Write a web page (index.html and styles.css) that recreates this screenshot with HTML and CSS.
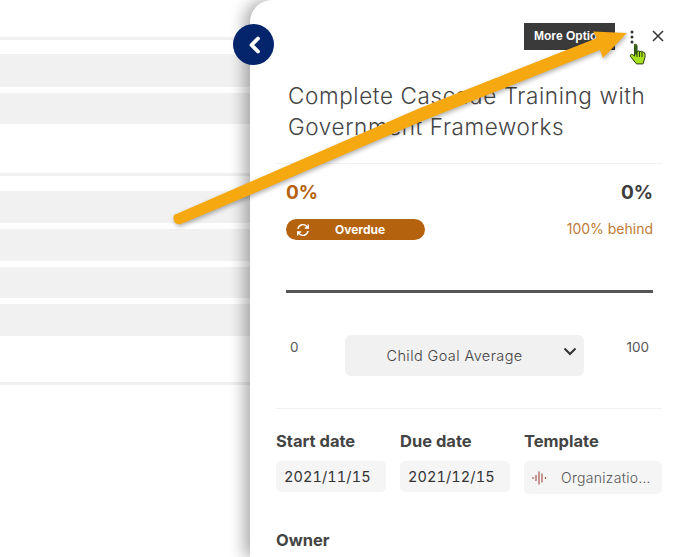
FILE: index.html
```html
<!DOCTYPE html>
<html lang="en">
<head>
<meta charset="utf-8">
<title>Goal detail</title>
<link rel="stylesheet" href="styles.css">
</head>
<body>
<main class="page">
  <section class="list">
    <div class="rule rule-a"></div>
    <div class="row row-a"></div>
    <div class="row row-b"></div>
    <div class="rule rule-b"></div>
    <div class="row row-c"></div>
    <div class="row row-d"></div>
    <div class="row row-e"></div>
    <div class="row row-f"></div>
    <div class="rule rule-c"></div>
  </section>

  <aside class="panel">
    <header class="actions">
      <div class="tooltip">More Options</div>
      <svg class="dots" width="6" height="18" viewBox="0 0 6 18"><circle cx="3" cy="3" r="1.500"/><circle cx="3" cy="8" r="1.500"/><circle cx="3" cy="13" r="1.500"/></svg>
      <svg class="close" width="12" height="12" viewBox="0 0 12 12"><path d="M1 1l10 10M11 1L1 11"/></svg>
    </header>
    <h1 class="title">Complete Cascade Training with Government Frameworks</h1>
    <div class="progress">
      <div class="stat-row">
        <span class="pct pct-warn">0%</span>
        <span class="pct">0%</span>
      </div>
      <div class="status-row">
        <span class="pill">
          <svg class="pill-icon" width="14" height="14" viewBox="0 0 14 14"><path d="M2 6a5 5 0 0 1 9-2.300L12.300 5M12.300 1.500V5H8.800M12 8a5 5 0 0 1-9 2.300L1.700 9M1.700 12.500V9h3.500"/></svg>
          <span class="pill-text">Overdue</span>
        </span>
        <span class="behind">100% behind</span>
      </div>
      <div class="track"></div>
      <div class="scale">
        <span class="scale-num">0</span>
        <div class="select">
          <span>Child Goal Average</span>
          <svg class="chevron" width="14" height="9" viewBox="0 0 14 9"><path d="M1.500 1.500L7 7l5.500-5.500"/></svg>
        </div>
        <span class="scale-num">100</span>
      </div>
    </div>
    <div class="fields">
      <div class="field field-date">
        <div class="label">Start date</div>
        <div class="input">2021/11/15</div>
      </div>
      <div class="field field-date">
        <div class="label">Due date</div>
        <div class="input">2021/12/15</div>
      </div>
      <div class="field field-template">
        <div class="label">Template</div>
        <div class="input input-template">
          <svg class="wave" width="16" height="16" viewBox="0 0 16 16"><path d="M1 7v2M4 5v6M7 1.500v13M10 3.500v9M13.500 7v2"/></svg>
          <span class="template-name">Organizatio...</span>
        </div>
      </div>
    </div>
    <div class="label owner">Owner</div>
  </aside>

  <button class="back" type="button" aria-label="Back">
    <svg width="14" height="20" viewBox="0 0 14 20"><path d="M11 3.500L4.500 10l6.500 6.500"/></svg>
  </button>

  <svg class="arrow" width="688" height="557" viewBox="0 0 688 557">
    <path class="arrow-shape" d="M174 215L250 182 420 108 597 38 593 31.500 627 33 603 58 600 50 420 122 250 195 181 224Q175 225 174 220.500Q173 217 174 215Z"/>
  </svg>
  <svg class="cursor" width="18" height="22" viewBox="0 0 18 22">
    <path class="cursor-fill" d="M5.500 1.500c1.200-.6 2.500.2 2.500 1.200v5.800l1.500-.5 1.500.5 1.500-.2 1.500.7 1.500.7c.8 1.800.8 4 0 6.300l-1.500 4.900H7.500L1.500 13.500c-.6-1.300.5-2.600 2-2L5.500 13V2.500z"/>
    <path class="cursor-finger" d="M5.500 2.500c.5-1 2-1 2.500 0v9H5.500z"/>
    <path class="cursor-line" d="M8 8.500V14M10.500 8.500V14M13 9V14"/>
  </svg>
</main>
</body>
</html>
```
FILE: styles.css
```css
* { box-sizing: border-box; }
html, body { margin: 0; padding: 0; background: #fff; }
body { font-family: "Inter", "Noto Sans", sans-serif; color: #444; }

.page {
  position: relative;
  width: 688px;
  height: 557px;
  overflow: hidden;
  background: #fff;
}

/* Background list */
.list { width: 250px; display: flex; flex-direction: column; padding-top: 37px; }
.rule { height: 3px; background: #f0f0f0; }
.row { background: #f1f1f1; }
.row-a { height: 33px; margin-top: 14px; }
.row-b { height: 31px; margin-top: 6px; }
.rule-b { margin-top: 49px; }
.row-c { height: 32px; margin-top: 15px; }
.row-d { height: 32px; margin-top: 6px; }
.row-e { height: 31px; margin-top: 6px; }
.row-f { height: 32px; margin-top: 6px; }
.rule-c { margin-top: 46px; }

/* Panel */
.panel {
  position: absolute;
  left: 250px;
  top: 0;
  width: 438px;
  height: 557px;
  padding-left: 26px;
  padding-right: 26px;
  background: #fff;
  border-top-left-radius: 22px;
  box-shadow: -6px 0 15px rgba(0, 0, 0, 0.32);
  overflow: hidden;
}

.actions {
  display: flex;
  align-items: flex-start;
  height: 80px;
  padding: 23px 0 0 248px;
}
.tooltip {
  width: 91px;
  height: 27px;
  flex: none;
  padding: 6px 0 0 10px;
  background: #3a3a3a;
  color: #fff;
  font: 700 12px/15px "Liberation Sans", Arial, sans-serif;
  white-space: nowrap;
  overflow: hidden;
}
.dots { flex: none; margin: 6px 0 0 14px; fill: #333; }
.close { flex: none; margin: 7px 0 0 17px; fill: none; stroke: #333; stroke-width: 1.500; }

.title {
  margin: 0 0 0 12px;
  padding-bottom: 21px;
  font-weight: 300;
  font-size: 22.500px;
  letter-spacing: 0.6px;
  line-height: 31px;
  color: #444;
}

.progress { border-top: 1px solid #f2f2f2; padding: 18px 9px 0 10px; height: 246px; border-bottom: 1px solid #f2f2f2; }
.stat-row { display: flex; justify-content: space-between; align-items: center; height: 22px; }
.pct { font-weight: 700; font-size: 19px; line-height: 22px; color: #3c3c3c; }
.pct-warn { color: #b5620f; }

.status-row { display: flex; justify-content: space-between; align-items: center; margin-top: 15px; height: 21px; }
.pill {
  width: 139px;
  height: 21px;
  display: flex;
  align-items: center;
  padding-left: 10px;
  border-radius: 11px;
  background: #b5620f;
  color: #fff;
  font-weight: 700;
  font-size: 12px;
}
.pill-icon { flex: none; fill: none; stroke: #fff; stroke-width: 1.400; }
.pill-text { margin-left: 25px; }
.behind { font-size: 14px; color: #c07a36; margin-top: -2px; }

.track { height: 3px; margin-top: 50px; background: #555; }

.scale { display: flex; align-items: flex-start; margin-top: 42px; }
.scale-num { font-size: 13.500px; line-height: 18px; color: #555; margin-top: 3px; }
.scale-num:first-child { margin-left: 4px; }
.select {
  position: relative;
  width: 239px;
  height: 41px;
  margin-left: 46px;
  margin-right: 43px;
  padding-right: 19px;
  display: flex;
  align-items: center;
  justify-content: center;
  background: #f1f1f1;
  border-radius: 6px;
  font-size: 14.500px;
  letter-spacing: 0.4px;
  font-weight: 300;
  color: #444;
}
.chevron { position: absolute; right: 7px; top: 12px; fill: none; stroke: #333; stroke-width: 2; }

.fields { display: flex; gap: 14px; margin-top: 22px; }
.field-date { width: 110px; }
.field-template { width: 138px; }
.label { font-weight: 700; font-size: 16.500px; line-height: 20px; color: #444; }
.input {
  display: flex;
  align-items: center;
  height: 31px;
  margin-top: 10px;
  padding-left: 8px;
  background: #f5f5f5;
  border-radius: 5px;
  font-size: 14.500px;
  font-variant-numeric: tabular-nums;
  letter-spacing: 0.1px;
  color: #333;
}
.input-template { height: 33px; padding-left: 8px; color: #555; letter-spacing: 0.3px; font-size: 14px; font-weight: 300; }
.wave { flex: none; fill: none; stroke: #a9645c; stroke-width: 1.300; }
.template-name { margin-left: 13px; white-space: nowrap; }
.owner { margin-top: 36px; }

/* Overlays */
.back {
  position: absolute;
  left: 233px;
  top: 24px;
  width: 41px;
  height: 41px;
  padding: 0;
  display: flex;
  align-items: center;
  justify-content: center;
  border: 0;
  border-radius: 50%;
  background: #04256b;
}
.back svg { fill: none; stroke: #fff; stroke-width: 3.800; stroke-linecap: round; stroke-linejoin: round; }

.arrow { position: absolute; left: 0; top: 0; pointer-events: none; filter: drop-shadow(1px 2px 2px rgba(0, 0, 0, 0.3)); }
.arrow-shape { fill: #f5a80f; }

.cursor { position: absolute; left: 629px; top: 43px; }
.cursor-fill { fill: #a6e21d; stroke: #2c3a10; stroke-width: 1; }
.cursor-finger { fill: #2f6412; }
.cursor-line { fill: none; stroke: #2c3a10; stroke-width: 1; }
```
